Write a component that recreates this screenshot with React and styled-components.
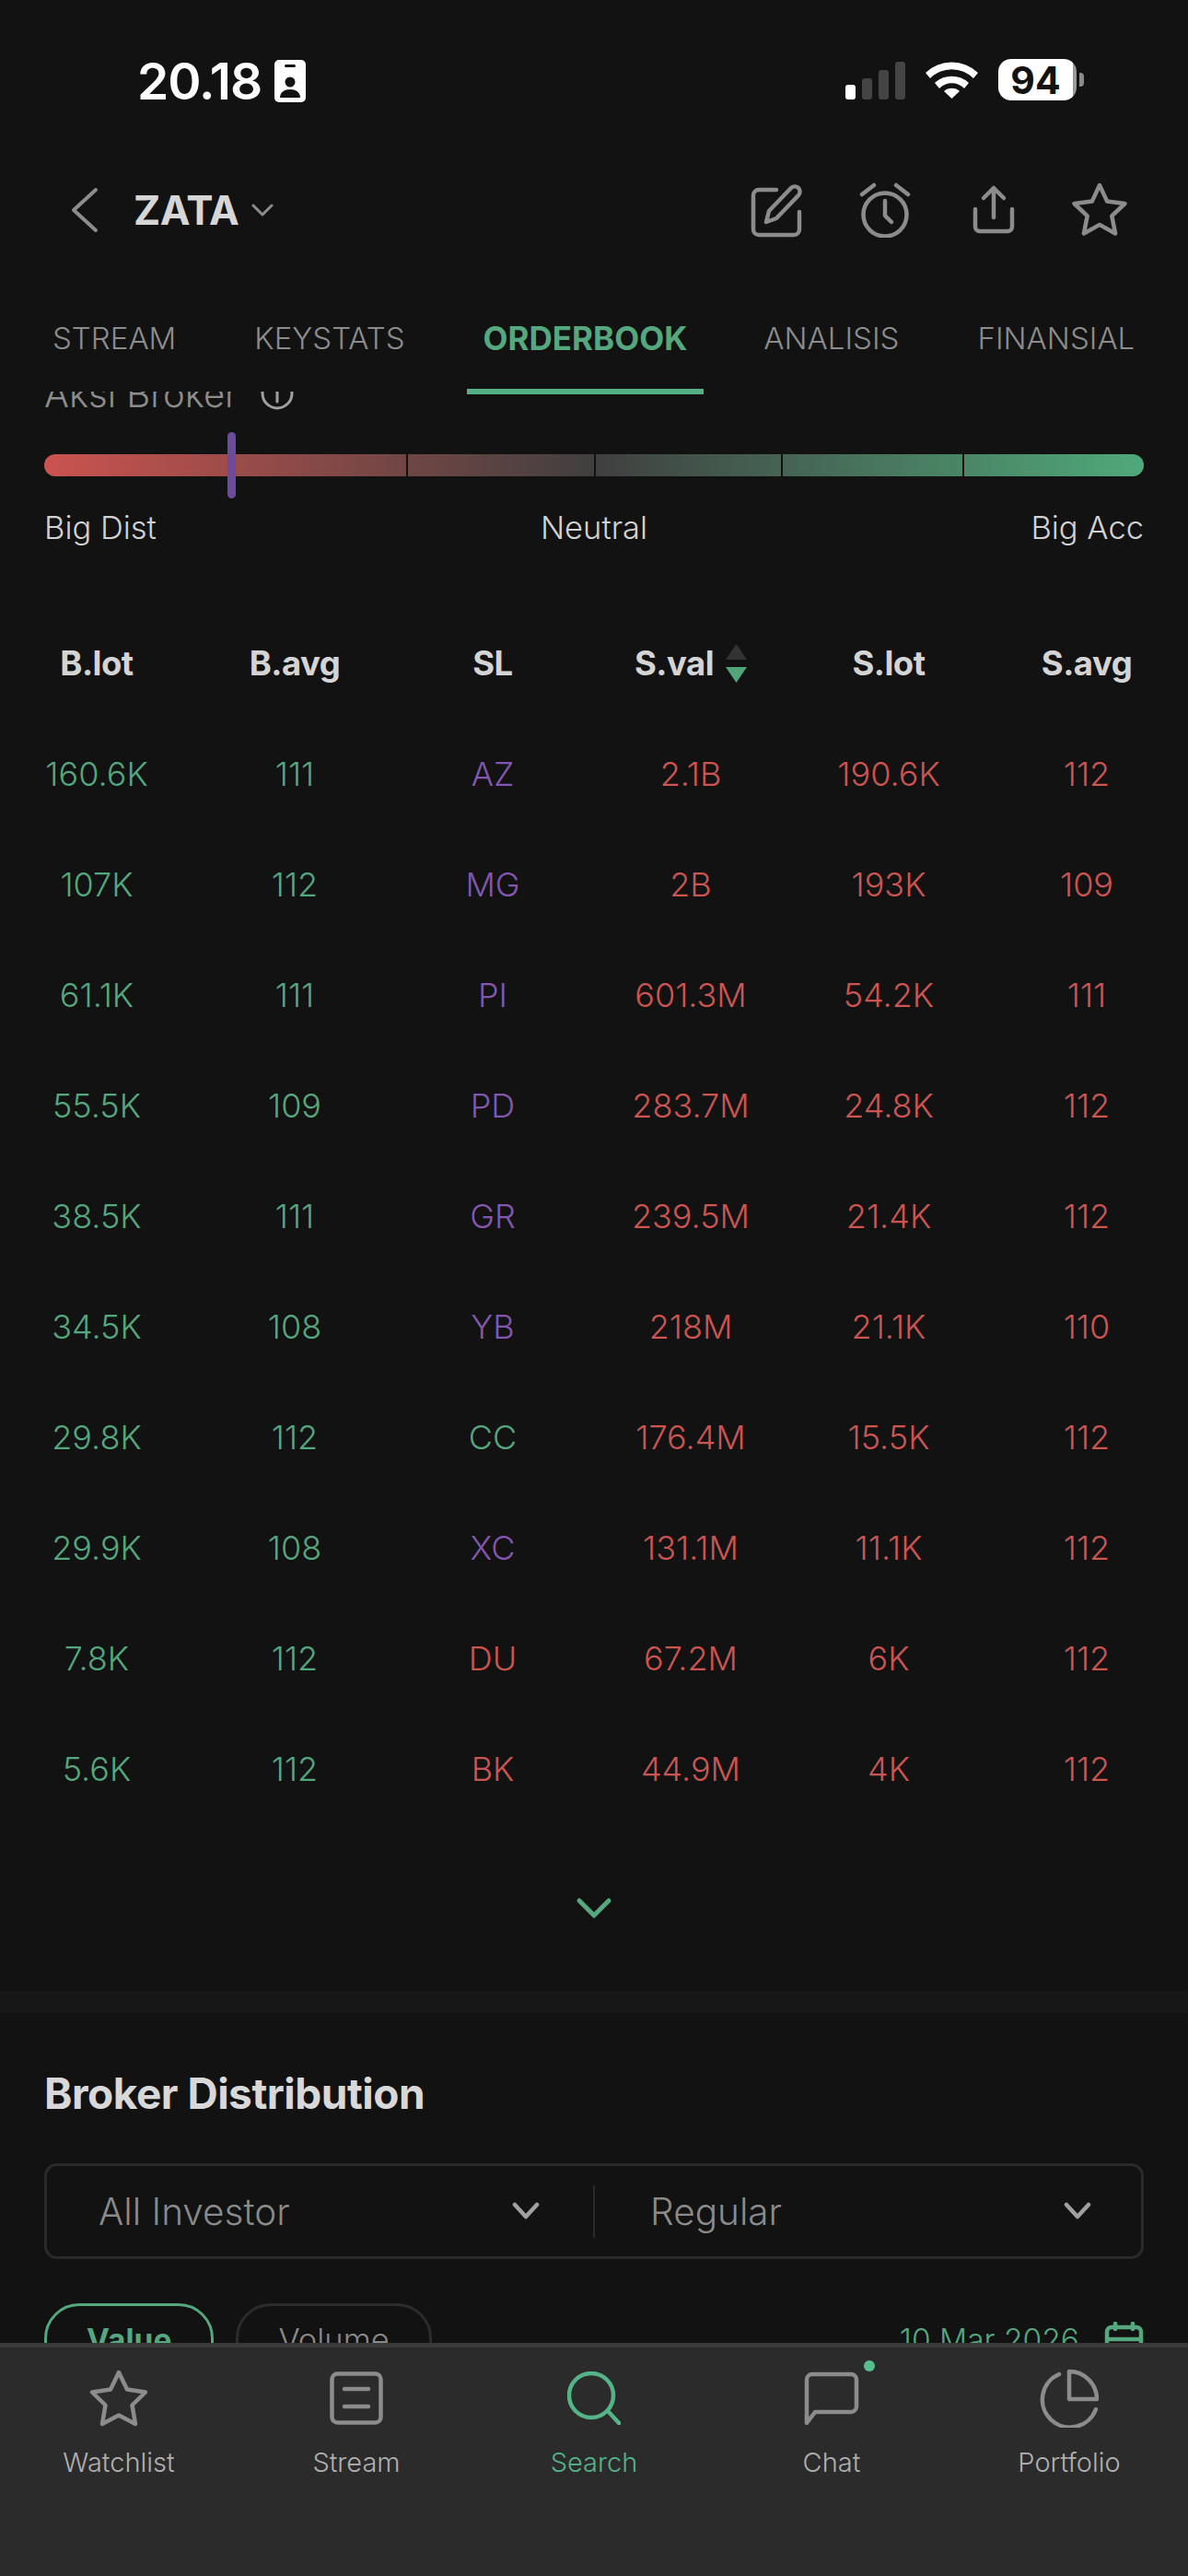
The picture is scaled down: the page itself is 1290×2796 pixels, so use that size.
import React from 'react';
import styled, { createGlobalStyle } from 'styled-components';

const GREEN = '#55a77e';
const RED = '#cc5552';
const PURPLE = '#8257ad';
const GREY = '#8c8c8c';

const GlobalStyle = createGlobalStyle`
  html, body {
    margin: 0;
    padding: 0;
    background: #121212;
  }
  * {
    box-sizing: border-box;
  }
`;

const Screen = styled.div`
  width: 1290px;
  height: 2796px;
  display: flex;
  flex-direction: column;
  overflow: hidden;
  background: #121212;
  font-family: Inter, "Liberation Sans", sans-serif;
  font-weight: 300;
`;

const StatusBar = styled.div`
  height: 170px;
  flex-shrink: 0;
  padding: 65px 113px 0 149px;
  display: flex;
  justify-content: space-between;
  align-items: flex-start;
`;

const StatusLeft = styled.div`
  display: flex;
  align-items: center;
  gap: 14px;
`;

const Clock = styled.span`
  font-size: 55px;
  line-height: 46px;
  font-weight: 600;
  color: #fff;
  letter-spacing: -1px;
`;

const StatusRight = styled.div`
  display: flex;
  align-items: flex-start;
  gap: 22px;
`;

const Signal = styled.div`
  display: flex;
  align-items: flex-end;
  gap: 7px;
  height: 42px;
  margin-top: 1px;
`;

const SignalBar = styled.span`
  width: 11px;
  height: ${p => p.$h}px;
  border-radius: 3px;
  background: ${p => (p.$on ? '#fff' : '#444')};
`;

const Battery = styled.div`
  width: 93px;
  height: 45px;
  margin-top: -1px;
  display: flex;
  align-items: center;
`;

const BatteryBody = styled.div`
  width: 85px;
  height: 45px;
  border-radius: 14px;
  background: linear-gradient(90deg, #fff 0 81px, #999 81px);
  color: #121212;
  font-size: 41px;
  font-weight: 700;
  display: flex;
  align-items: center;
  justify-content: center;
  padding-right: 4px;
`;

const BatteryNub = styled.span`
  width: 5px;
  height: 15px;
  margin-left: 3px;
  border-radius: 0 4px 4px 0;
  background: #8a8a8a;
`;

const Header = styled.div`
  height: 115px;
  flex-shrink: 0;
  padding: 0 66px 0 76px;
  display: flex;
  align-items: center;
  justify-content: space-between;
`;

const HeaderLeft = styled.div`
  display: flex;
  align-items: center;
`;

const Ticker = styled.span`
  margin-left: 38px;
  font-size: 44px;
  font-weight: 700;
  color: #d6d6d6;
  letter-spacing: -0.5px;
`;

const TickerCaret = styled.span`
  display: flex;
  margin-left: 14px;
`;

const HeaderActions = styled.div`
  display: flex;
  align-items: center;
`;

const ActionIcon = styled.span`
  display: flex;
  margin-left: ${p => p.$gap || 0}px;
`;

const Tabs = styled.div`
  height: 140px;
  flex-shrink: 0;
  padding: 58px 0 0 39px;
  display: flex;
  gap: 49px;
  position: relative;
  z-index: 2;
`;

const Tab = styled.div`
  position: relative;
  height: 48px;
  padding: 0 18px;
  margin-right: ${p => (p.$active ? -2 : 0)}px;
  font-size: ${p => (p.$active ? 35 : 33)}px;
  line-height: 48px;
  white-space: nowrap;
  color: ${p => (p.$active ? GREEN : GREY)};
  font-weight: ${p => (p.$active ? 700 : 300)};

  ${p => p.$active && `
    &::after {
      content: "";
      position: absolute;
      left: 0;
      right: 0;
      top: 79px;
      height: 6px;
      background: #55b086;
    }
  `}
`;

const Scroller = styled.div`
  flex: 1;
  min-height: 0;
  overflow: hidden;
`;

const ScrollContent = styled.div`
  margin-top: -23px;
`;

const Sentiment = styled.div`
  padding: 0 48px;
`;

const SentimentTitle = styled.div`
  height: 50px;
  display: flex;
  align-items: center;
  gap: 24px;
  font-size: 40px;
  color: #8c8c8c;
`;

const Meter = styled.div`
  position: relative;
  margin-top: 41px;
  height: 24px;
  border-radius: 12px;
  background: linear-gradient(90deg, #cb534f 0%, #403f3f 50%, #4fa97a 100%);
`;

const MeterTick = styled.span`
  position: absolute;
  top: 0;
  bottom: 0;
  left: ${p => p.$x}px;
  width: 2px;
  background: #121212;
`;

const MeterMarker = styled.span`
  position: absolute;
  left: 199px;
  top: -24px;
  width: 9px;
  height: 72px;
  border-radius: 5px;
  background: #6c4a9c;
`;

const MeterLabels = styled.div`
  margin-top: 35px;
  height: 40px;
  display: grid;
  grid-template-columns: 1fr auto 1fr;
  align-items: center;
  font-size: 34.5px;
  color: #d2d2d2;

  & > :last-child {
    text-align: right;
  }
`;

const Table = styled.div`
  margin-top: 68px;
`;

const Row = styled.div`
  height: 120px;
  display: grid;
  grid-template-columns: repeat(6, 210px);
  column-gap: 5px;
  align-items: center;
  justify-items: center;
`;

const HeadCell = styled.div`
  display: flex;
  align-items: center;
  gap: 13px;
  font-size: 36.5px;
  font-weight: 700;
  color: #d4d4d4;
  letter-spacing: -0.5px;
`;

const SortArrows = styled.span`
  display: flex;
  flex-direction: column;
  gap: 8px;
`;

const Cell = styled.div`
  font-size: 36px;
  color: ${p => p.$color};
`;

const MoreRow = styled.div`
  height: 181px;
  display: flex;
  align-items: center;
  justify-content: center;
`;

const Band = styled.div`
  height: 24px;
  background: #171717;
`;

const Distribution = styled.div`
  padding: 62px 48px 0;
`;

const SectionTitle = styled.div`
  height: 50px;
  line-height: 50px;
  font-size: 46px;
  font-weight: 700;
  color: #d8d8d8;
  letter-spacing: -0.5px;
`;

const Selects = styled.div`
  margin-top: 51px;
  height: 104px;
  display: flex;
  align-items: center;
  border: 3px solid #2a2a2a;
  border-radius: 14px;
`;

const SelectPart = styled.div`
  flex: 1;
  height: 57px;
  padding: 0 58px 0 56px;
  display: flex;
  align-items: center;
  justify-content: space-between;
  font-size: 40.5px;
  color: #8a8a8a;

  & + & {
    padding: 0 54px 0 60px;
    border-left: 2px solid #2a2a2a;
  }
`;

const FilterRow = styled.div`
  margin-top: 48px;
  display: flex;
  align-items: flex-start;
`;

const Pill = styled.div`
  height: 90px;
  margin-right: 24px;
  padding: 17px 43px 0;
  border: 3px solid ${p => (p.$active ? GREEN : '#2c2c2c')};
  border-radius: 38px;
  font-size: ${p => (p.$active ? 33.5 : 34.5)}px;
  line-height: 40px;
  font-weight: ${p => (p.$active ? 700 : 300)};
  color: ${p => (p.$active ? GREEN : '#8a8a8a')};
`;

const DateLabel = styled.div`
  margin-left: auto;
  display: flex;
  align-items: flex-start;
  gap: 27px;
  padding-top: 20px;
  font-size: 33.5px;
  line-height: 40px;
  color: ${GREEN};
`;

const Nav = styled.div`
  height: 253px;
  flex-shrink: 0;
  display: grid;
  grid-template-columns: repeat(5, 1fr);
  align-items: start;
  padding-top: 23px;
  background: #2b2b2b;
  border-top: 5px solid #3a3a3a;
`;

const NavItem = styled.div`
  display: flex;
  flex-direction: column;
  align-items: center;
  font-size: 29px;
  line-height: 40px;
  color: ${p => (p.$active ? '#55b388' : '#b0b0b0')};
`;

const NavIcon = styled.div`
  position: relative;
  height: 64px;
  display: flex;
  align-items: center;
  justify-content: center;
  margin-bottom: 18px;
`;

const NavDot = styled.span`
  position: absolute;
  top: -9px;
  right: -17px;
  width: 12px;
  height: 12px;
  border-radius: 50%;
  background: #55c08e;
`;

const rows = [
  ['160.6K', '111', 'AZ', 'p', '2.1B', '190.6K', '112'],
  ['107K', '112', 'MG', 'p', '2B', '193K', '109'],
  ['61.1K', '111', 'PI', 'p', '601.3M', '54.2K', '111'],
  ['55.5K', '109', 'PD', 'p', '283.7M', '24.8K', '112'],
  ['38.5K', '111', 'GR', 'p', '239.5M', '21.4K', '112'],
  ['34.5K', '108', 'YB', 'p', '218M', '21.1K', '110'],
  ['29.8K', '112', 'CC', 'g', '176.4M', '15.5K', '112'],
  ['29.9K', '108', 'XC', 'p', '131.1M', '11.1K', '112'],
  ['7.8K', '112', 'DU', 'r', '67.2M', '6K', '112'],
  ['5.6K', '112', 'BK', 'r', '44.9M', '4K', '112'],
];

const brokerColor = { p: PURPLE, g: GREEN, r: RED };

const Line = ({ w, h, sw = 4.5, color = GREY, children }) => (
  <svg width={w} height={h} viewBox={`0 0 ${w} ${h}`} fill="none" stroke={color} strokeWidth={sw} strokeLinecap="round" strokeLinejoin="round">
    {children}
  </svg>
);

const IdBadge = () => (
  <svg width="34" height="46" viewBox="0 0 34 46">
    <rect width="34" height="46" rx="5" fill="#fff" />
    <rect x="11" y="5" width="12" height="3" rx="1.5" fill="#121212" />
    <circle cx="17" cy="24" r="5.5" fill="#121212" />
    <path d="M6 41c0-6 5-9 11-9s11 3 11 9z" fill="#121212" />
  </svg>
);

const Wifi = () => (
  <svg width="57" height="42" viewBox="0 0 57 42">
    <path d="M0 14a41 41 0 0 1 57 0l-5 6a33 33 0 0 0-47 0z" fill="#fff" />
    <path d="M10 25a27 27 0 0 1 37 0l-5 6a19 19 0 0 0-27 0z" fill="#fff" />
    <path d="M20 34a13 13 0 0 1 17 0l-8.5 8z" fill="#fff" />
  </svg>
);

const Chevron = () => (
  <Line w={30} h={20} color="#a0a0a0" sw={4.5}><path d="M3 3l12 13L27 3" /></Line>
);

const App = () => (
  <Screen>
    <GlobalStyle />
    <StatusBar>
      <StatusLeft>
        <Clock>20.18</Clock>
        <IdBadge />
      </StatusLeft>
      <StatusRight>
        <Signal>
          <SignalBar $h={16} $on />
          <SignalBar $h={23} />
          <SignalBar $h={32} />
          <SignalBar $h={41} />
        </Signal>
        <Wifi />
        <Battery>
          <BatteryBody>94</BatteryBody>
          <BatteryNub />
        </Battery>
      </StatusRight>
    </StatusBar>

    <Header>
      <HeaderLeft>
        <Line w={31} h={50} sw={4}>
          <path d="M28 3L4 25l24 22" />
        </Line>
        <Ticker>ZATA</Ticker>
        <TickerCaret>
          <Line w={24} h={14} sw={3}>
            <path d="M2 2l10 10L22 2" />
          </Line>
        </TickerCaret>
      </HeaderLeft>
      <HeaderActions>
        <ActionIcon>
          <Line w={60} h={60}>
            <path d="M28 8H9a6 6 0 0 0-6 6v37a6 6 0 0 0 6 6h38a6 6 0 0 0 6-6V32" />
            <path d="M17 43l3-12L44 6a6 6 0 0 1 8 0 6 6 0 0 1 0 8L28 39z" />
          </Line>
        </ActionIcon>
        <ActionIcon $gap={58}>
          <Line w={56} h={60}>
            <circle cx="28" cy="35" r="23.5" />
            <path d="M28 20v16l7 7" />
            <path d="M3 13l13-10M53 13L40 3" />
          </Line>
        </ActionIcon>
        <ActionIcon $gap={67}>
          <Line w={46} h={56}>
            <path d="M23 36V4M12 15L23 4l11 11" />
            <path d="M3 27v19a5 5 0 0 0 5 5h30a5 5 0 0 0 5-5V27" />
          </Line>
        </ActionIcon>
        <ActionIcon $gap={62}>
          <Line w={60} h={60}>
            <path d="M30 3l8.2 17.6 19.3 2.4-14.2 13.3 3.8 19.2L30 45.9 12.9 55.5l3.8-19.2L2.5 23l19.3-2.4z" />
          </Line>
        </ActionIcon>
      </HeaderActions>
    </Header>

    <Tabs>
      <Tab>STREAM</Tab>
      <Tab>KEYSTATS</Tab>
      <Tab $active>ORDERBOOK</Tab>
      <Tab>ANALISIS</Tab>
      <Tab>FINANSIAL</Tab>
    </Tabs>

    <Scroller>
      <ScrollContent>
        <Sentiment>
          <SentimentTitle>
            Aksi Broker
            <Line w={36} h={36} sw={3} color="#a0a0a0">
              <circle cx="18" cy="18" r="16" />
              <path d="M18 9v18" />
            </Line>
          </SentimentTitle>
          <Meter>
            <MeterTick $x={393} />
            <MeterTick $x={597} />
            <MeterTick $x={800} />
            <MeterTick $x={997} />
            <MeterMarker />
          </Meter>
          <MeterLabels>
            <span>Big Dist</span>
            <span>Neutral</span>
            <span>Big Acc</span>
          </MeterLabels>
        </Sentiment>

        <Table>
          <Row>
            <HeadCell>B.lot</HeadCell>
            <HeadCell>B.avg</HeadCell>
            <HeadCell>SL</HeadCell>
            <HeadCell>
              S.val
              <SortArrows>
                <svg width="23" height="17" viewBox="0 0 23 17"><path d="M11.5 0L23 17H0z" fill="#333" /></svg>
                <svg width="23" height="17" viewBox="0 0 23 17"><path d="M0 0h23L11.5 17z" fill="#4fa67a" /></svg>
              </SortArrows>
            </HeadCell>
            <HeadCell>S.lot</HeadCell>
            <HeadCell>S.avg</HeadCell>
          </Row>
          {rows.map(r => (
            <Row key={r[2]}>
              <Cell $color={GREEN}>{r[0]}</Cell>
              <Cell $color={GREEN}>{r[1]}</Cell>
              <Cell $color={brokerColor[r[3]]}>{r[2]}</Cell>
              <Cell $color={RED}>{r[4]}</Cell>
              <Cell $color={RED}>{r[5]}</Cell>
              <Cell $color={RED}>{r[6]}</Cell>
            </Row>
          ))}
        </Table>

        <MoreRow>
          <Line w={40} h={24} color={GREEN} sw={5}>
            <path d="M4 4l16 16L36 4" />
          </Line>
        </MoreRow>
        <Band />

        <Distribution>
          <SectionTitle>Broker Distribution</SectionTitle>
          <Selects>
            <SelectPart>
              All Investor
              <Chevron />
            </SelectPart>
            <SelectPart>
              Regular
              <Chevron />
            </SelectPart>
          </Selects>
          <FilterRow>
            <Pill $active>Value</Pill>
            <Pill>Volume</Pill>
            <DateLabel>
              10 Mar 2026
              <Line w={43} h={50} color={GREEN} sw={4.5}>
                <rect x="3" y="6" width="37" height="40" rx="5" />
                <path d="M3 19h37M12 2v6M31 2v6" />
              </Line>
            </DateLabel>
          </FilterRow>
        </Distribution>
      </ScrollContent>
    </Scroller>

    <Nav>
      <NavItem>
        <NavIcon>
          <Line w={64} h={62}>
            <path d="M32 3l9 18.5 20 3-14.5 14 3.5 20.5L32 49.5 14 59l3.500-20.500L3 24.500l20-3z" />
          </Line>
        </NavIcon>
        Watchlist
      </NavItem>
      <NavItem>
        <NavIcon>
          <Line w={58} h={58}>
            <rect x="2.5" y="2.5" width="53" height="53" rx="6" />
            <path d="M16 19h26M16 38h26" />
          </Line>
        </NavIcon>
        Stream
      </NavItem>
      <NavItem $active>
        <NavIcon>
          <Line w={58} h={58} color="#55b388" sw={4.5}>
            <circle cx="26" cy="26" r="24" />
            <path d="M45 44l12 13" />
          </Line>
        </NavIcon>
        Search
      </NavItem>
      <NavItem>
        <NavIcon>
          <Line w={60} h={58}>
            <path d="M3 56V9a6 6 0 0 1 6-6h42a6 6 0 0 1 6 6v29a6 6 0 0 1-6 6H12z" />
          </Line>
          <NavDot />
        </NavIcon>
        Chat
      </NavItem>
      <NavItem>
        <NavIcon>
          <Line w={64} h={64}>
            <path d="M21 6A30 30 0 1 0 61 44" />
            <path d="M32 3a30 30 0 0 1 30 30H32z" />
          </Line>
        </NavIcon>
        Portfolio
      </NavItem>
    </Nav>
  </Screen>
);

export default App;
